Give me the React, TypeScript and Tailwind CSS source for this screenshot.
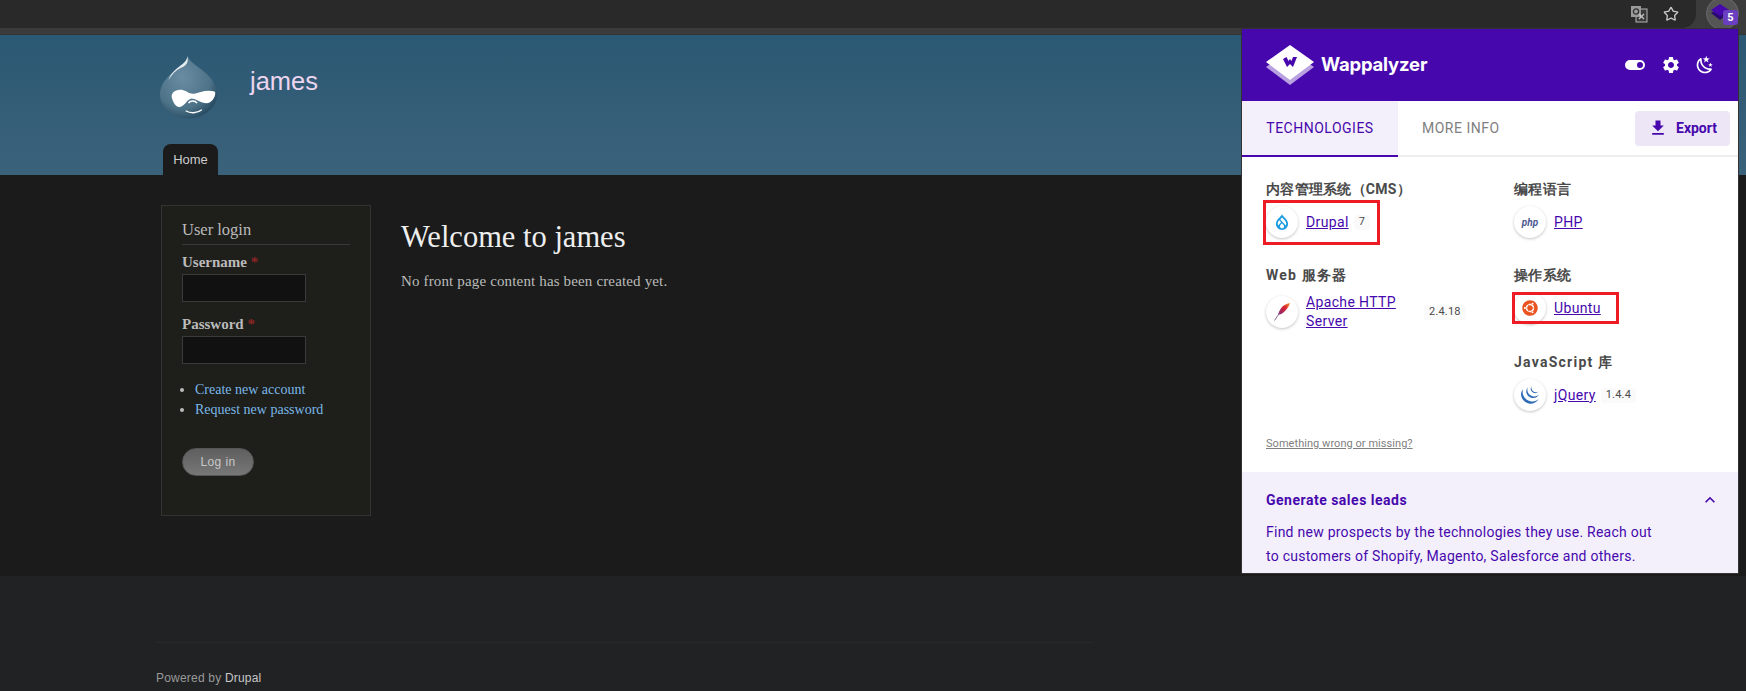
import React from 'react';
import { Star } from 'lucide-react';
import { MdSettings } from 'react-icons/md';
import { FaUbuntu } from 'react-icons/fa';
import { SiDrupal, SiJquery } from 'react-icons/si';

const DrupalDrop = () => (
  <svg width="57" height="64" viewBox="0 0 60 66">
    <defs>
      <radialGradient id="drop" cx="40%" cy="35%" r="70%">
        <stop offset="0%" stopColor="#6a8ca2" />
        <stop offset="70%" stopColor="#4d7389" />
        <stop offset="100%" stopColor="#274a60" />
      </radialGradient>
    </defs>
    <path d="M29 0 C31 7 42 12 50 20 C57 27 60 33 60 41 C60 55 46 66 30 66 C14 66 0 55 0 41 C0 31 6 24 14 17 C21 11 27 8 29 0Z" fill="url(#drop)" />
    <path d="M29 1 C30 7 28 10 24 12 C19 14 14 17 9 26 C11 19 17 14 21 11 C25 8 28 6 29 1Z" fill="#e6edf1" />
    <path d="M13 46 C10 39 17 35 23 36 C28 37 31 41 36 40 C41 39 50 35 58 38 C59 44 54 50 49 50 C43 50 38 45 33 45 C28 46 26 54 20 54 C17 54 14 50 13 46Z" fill="#fff" />
    <path d="M30 50 C32 47 37 47 39 50" stroke="#fff" strokeWidth="1.5" fill="none" />
    <path d="M27 58 C32 61 39 61 44 57" stroke="#fff" strokeWidth="1.5" fill="none" />
  </svg>
);

const TranslateIcon = () => (
  <svg width="18" height="18" viewBox="0 0 18 18">
    <rect x="6" y="4" width="11" height="13" fill="#3a3a3a" stroke="#b5b5b5" strokeWidth="1" />
    <rect x="1" y="1" width="10" height="11" fill="#9a9a9a" />
    <circle cx="6" cy="6.5" r="2.6" fill="none" stroke="#333" strokeWidth="1.3" />
    <path d="M9 9 L14 14 M14 9 L9 14" stroke="#c8c8c8" strokeWidth="1.2" />
  </svg>
);

const ApacheFeather = () => (
  <svg width="18" height="20" viewBox="0 0 18 20">
    <defs>
      <linearGradient id="feather" x1="1" y1="0" x2="0" y2="1">
        <stop offset="0%" stopColor="#f59a2f" />
        <stop offset="40%" stopColor="#d8232f" />
        <stop offset="100%" stopColor="#7b2a7f" />
      </linearGradient>
    </defs>
    <path d="M17 1 C13 1.5 9.5 4 7.5 7 C6.2 9 5.5 11 5 13 C7.5 12.5 10 11.5 12 9 C14.5 6.5 16 4 17 1Z" fill="url(#feather)" />
    <path d="M6.5 11 L1.5 18.5" stroke="#8a6a8f" strokeWidth="1" />
  </svg>
);

const WappLogo = () => (
  <svg width="48" height="40" viewBox="0 0 48 40">
    <path d="M24 6 L48 22 L24 40 L0 22Z" fill="#b9a0e0" />
    <path d="M24 0 L48 17 L24 35 L0 17Z" fill="#fff" />
    <path d="M17 14 L21 22 L24 19 L27 22 L31 12 L27 12 L25.5 16 L24 14 L22.5 16 L20.5 12Z" fill="#4608ad" />
  </svg>
);

const Tech = ({ icon, name, version, wide }: { icon: React.ReactNode; name: string; version?: string; wide?: boolean }) => (
  <div className={`flex items-center h-[32px] ${wide ? 'mt-[11px]' : ''}`}>
    <div className="w-[32px] h-[32px] shrink-0 rounded-full bg-white shadow-[0_1px_3px_rgba(0,0,0,0.24)] flex items-center justify-center">
      {icon}
    </div>
    <a className={`ml-[8px] text-[14px] leading-[19px] tracking-[0.35px] text-[#4608ad] underline ${wide ? 'w-[96px]' : ''}`}>{name}</a>
    {version && (
      <span className={`${wide ? 'ml-[22px]' : 'ml-[5px]'} px-[5px] h-[15px] flex items-center rounded-[3px] bg-[#fafafa] text-[11px] tracking-[0.2px] text-[#4a4a4a]`}>{version}</span>
    )}
  </div>
);

const Category = ({ title, latin, children }: { title: string; latin?: boolean; children: React.ReactNode }) => (
  <div>
    <div className={`h-[20px] text-[14px] leading-[20px] font-bold text-[#4a4a4a] ${latin ? 'tracking-[1.25px]' : 'tracking-[0.25px]'}`}>{title}</div>
    <div className="mt-[7px]">{children}</div>
  </div>
);

const Popup = () => (
  <div className="absolute left-[1241px] top-[28px] w-[498px] h-[546px] bg-white border border-[#333] overflow-hidden flex flex-col font-['Roboto',sans-serif]">
    <div className="h-[72px] shrink-0 bg-[#4608ad] flex items-center pl-[24px] pr-[23px]">
      <WappLogo />
      <span className="ml-[7px] text-white text-[18.5px] font-bold font-['Inter',sans-serif] tracking-[-0.2px]">Wappalyzer</span>
      <div className="ml-auto flex items-center gap-[14px] text-white">
        <svg width="24" height="24" viewBox="0 0 24 24" fill="currentColor">
          <path d="M17,7H7A5,5 0 0,0 2,12A5,5 0 0,0 7,17H17A5,5 0 0,0 22,12A5,5 0 0,0 17,7M17,15A3,3 0 0,1 14,12A3,3 0 0,1 17,9A3,3 0 0,1 20,12A3,3 0 0,1 17,15Z" />
        </svg>
        <MdSettings size={20} />
        <svg width="20" height="20" viewBox="0 0 24 24" fill="currentColor">
          <path d="M17.75,4.09L15.22,6.03L16.13,9.09L13.5,7.28L10.87,9.09L11.78,6.03L9.25,4.09L12.44,4L13.5,1L14.56,4L17.75,4.09M21.25,11L19.61,12.25L20.2,14.23L18.5,13.06L16.8,14.23L17.39,12.25L15.75,11L17.81,10.95L18.5,9L19.19,10.95L21.25,11M18.97,15.95C19.8,15.87 20.69,17.05 20.16,17.8C19.84,18.25 19.5,18.67 19.08,19.07C15.17,23 8.84,23 4.94,19.07C1.03,15.17 1.03,8.83 4.94,4.93C5.34,4.53 5.76,4.17 6.21,3.85C6.96,3.32 8.14,4.21 8.06,5.04C7.79,7.9 8.75,10.87 10.95,13.06C13.14,15.26 16.1,16.22 18.97,15.95M17.33,17.97C14.5,17.81 11.7,16.64 9.53,14.5C7.36,12.31 6.2,9.5 6.04,6.68C3.23,9.82 3.34,14.64 6.35,17.66C9.37,20.67 14.19,20.78 17.33,17.97Z" />
        </svg>
      </div>
    </div>
    <div className="h-[56px] shrink-0 flex items-stretch border-b-2 border-[#eeeeee]">
      <div className="w-[156px] -mb-[2px] bg-[#f4f0fb] border-b-2 border-[#4608ad] flex items-center justify-center text-[14px] tracking-[0.5px] text-[#4608ad]">TECHNOLOGIES</div>
      <div className="pl-[24px] flex items-center text-[14px] tracking-[0.5px] text-[#808080]">MORE INFO</div>
      <div className="ml-auto mr-[8px] self-center h-[35px] w-[95px] rounded-[4px] bg-[#ece6f6] flex items-center justify-center gap-[8px] text-[14px] font-bold text-[#4608ad]">
        <svg width="20" height="20" viewBox="0 0 24 24" fill="currentColor"><path d="M5,20H19V18H5M19,9H15V3H9V9H5L12,16L19,9Z" /></svg>
        Export
      </div>
    </div>
    <div className="flex-1 pl-[24px] pt-[22px] flex flex-col">
      <div className="flex gap-[24px] h-[258px]">
        <div className="w-[224px] flex flex-col gap-[27px]">
          <Category title="内容管理系统（CMS）">
            <Tech name="Drupal" version="7" icon={<SiDrupal size={16} color="#1b9ce0" />} />
          </Category>
          <Category title="Web 服务器" latin>
            <Tech name="Apache HTTP Server" version="2.4.18" wide icon={<ApacheFeather />} />
          </Category>
        </div>
        <div className="flex flex-col gap-[27px]">
          <Category title="编程语言">
            <Tech name="PHP" icon={<span className="text-[10px] italic font-bold text-[#4f5b93]">php</span>} />
          </Category>
          <Category title="操作系统">
            <Tech name="Ubuntu" icon={<FaUbuntu size={16} color="#e95420" />} />
          </Category>
          <div className="mt-[1px]">
            <Category title="JavaScript 库" latin>
              <Tech name="jQuery" version="1.4.4" icon={<SiJquery size={18} color="#2f6cb8" />} />
            </Category>
          </div>
        </div>
      </div>
      <a className="text-[11px] leading-[14px] tracking-[0.05px] text-[#808080] underline">Something wrong or missing?</a>
    </div>
    <div className="h-[101px] shrink-0 bg-[#f4f0fb] px-[24px] pt-[18px] text-[#4608ad]">
      <div className="flex items-center justify-between h-[20px]">
        <span className="text-[14px] font-bold tracking-[0.5px]">Generate sales leads</span>
        <svg width="20" height="20" viewBox="0 0 24 24" fill="currentColor" className="mr-[-6px]"><path d="M7.41,15.41L12,10.83L16.59,15.41L18,14L12,8L6,14L7.41,15.41Z" /></svg>
      </div>
      <p className="mt-[10px] text-[14px] leading-[24px] tracking-[0.25px]">
        Find new prospects by the technologies they use. Reach out<br />to customers of Shopify, Magento, Salesforce and others.
      </p>
    </div>
  </div>
);

const LoginBlock = () => (
  <div className="w-[210px] h-[311px] border border-[#333] bg-[#1e1e1a] px-[20px] pt-[13px] text-[14px] text-[#bbbbbb]">
    <div className="h-[26px] border-b border-[#3a3a3a] text-[16.5px] leading-[22px]">User login</div>
    <label className="block mt-[7px] text-[15px] leading-[20px] font-bold">Username <span className="text-[#8d2424]">*</span></label>
    <div className="w-[124px] h-[28px] mt-[2px] bg-[#111111] border border-[#3a3a3a]"></div>
    <label className="block mt-[12px] text-[15px] leading-[20px] font-bold">Password <span className="text-[#8d2424]">*</span></label>
    <div className="w-[124px] h-[28px] mt-[2px] bg-[#111111] border border-[#3a3a3a]"></div>
    <ul className="mt-[16px] list-disc pl-[13px] text-[#7ab8e8] marker:text-[#bbbbbb]">
      <li className="h-[20px] leading-[20px]">Create new account</li>
      <li className="h-[20px] leading-[20px]">Request new password</li>
    </ul>
    <button className="block mt-[28px] w-[72px] h-[28px] rounded-full border border-[#555] bg-gradient-to-b from-[#5f5f5f] to-[#777777] text-[12px] tracking-[0.4px] text-[#c8c8c8] font-['Liberation_Sans',sans-serif]">Log in</button>
  </div>
);

export default function App() {
  return (
    <div className="relative w-[1746px] h-[691px] overflow-hidden flex flex-col bg-[#212224] font-['Liberation_Serif',serif]">
      <div className="h-[35px] shrink-0 bg-[#3b3b3b] flex items-start border-b border-[#333]">
        <div className="flex-1 h-[28px] bg-[#292929] rounded-br-[14px] flex items-center justify-end gap-[15px] pr-[17px]">
          <TranslateIcon />
          <Star size={16} color="#c8c8c8" strokeWidth={2} />
        </div>
        <div className="relative w-[50px] h-[28px]">
          <div className="absolute left-[10px] top-[-3px] w-[33px] h-[33px] rounded-full bg-[#555555] border border-[#6a6a6a] flex items-center justify-center">
            <svg width="18" height="16" viewBox="0 0 18 16" className="mt-[-4px] ml-[-6px]">
              <path d="M9 4 L18 9 L9 16 L0 9Z" fill="#2a0a70" />
              <path d="M9 0 L18 6 L9 12 L0 6Z" fill="#4608ad" />
            </svg>
          </div>
          <div className="absolute left-[27px] top-[10px] w-[15px] h-[15px] rounded-[3px] bg-[#6a3fc0] text-white text-[11px] font-bold leading-[15px] text-center font-['Roboto',sans-serif]">5</div>
        </div>
      </div>

      <header className="h-[140px] shrink-0 bg-gradient-to-b from-[#2b5873] to-[#3b627b] pl-[160px] flex flex-col">
        <div className="flex items-start h-[109px] pt-[20px]">
          <DrupalDrop />
          <span className="ml-[33px] mt-[9px] text-[25.5px] leading-[34px] text-[#ecd5ee] font-['Liberation_Sans',sans-serif]">james</span>
        </div>
        <div className="ml-[3px] w-[55px] h-[31px] rounded-t-[8px] bg-[#1a1b1a] flex items-center justify-center text-[13px] text-[#cccccc] font-['Liberation_Sans',sans-serif]">Home</div>
      </header>

      <main className="h-[401px] shrink-0 bg-[#1a1b1a] pl-[161px] pt-[30px] flex">
        <LoginBlock />
        <div className="ml-[30px]">
          <h1 className="mt-[14px] text-[30.5px] leading-[36px] font-normal text-[#eeeeee]">Welcome to james</h1>
          <p className="mt-[16px] text-[15px] leading-[20px] tracking-[0.15px] text-[#bbbbbb]">No front page content has been created yet.</p>
        </div>
      </main>

      <footer className="flex-1 pl-[156px] pt-[66px] font-['Liberation_Sans',sans-serif]">
        <div className="w-[938px] border-t border-[#28292b]"></div>
        <div className="mt-[27px] text-[12px] leading-[16px] tracking-[0.2px] text-[#999999]">Powered by <span className="text-[#c8c8c8]">Drupal</span></div>
      </footer>

      <Popup />

      {/* red annotation boxes drawn over the screenshot */}
      <div className="absolute left-[1263px] top-[200px] w-[117px] h-[45px] border-[3px] border-[#ed1c24]"></div>
      <div className="absolute left-[1512px] top-[292px] w-[107px] h-[32px] border-[3px] border-[#ed1c24]"></div>
    </div>
  );
}
